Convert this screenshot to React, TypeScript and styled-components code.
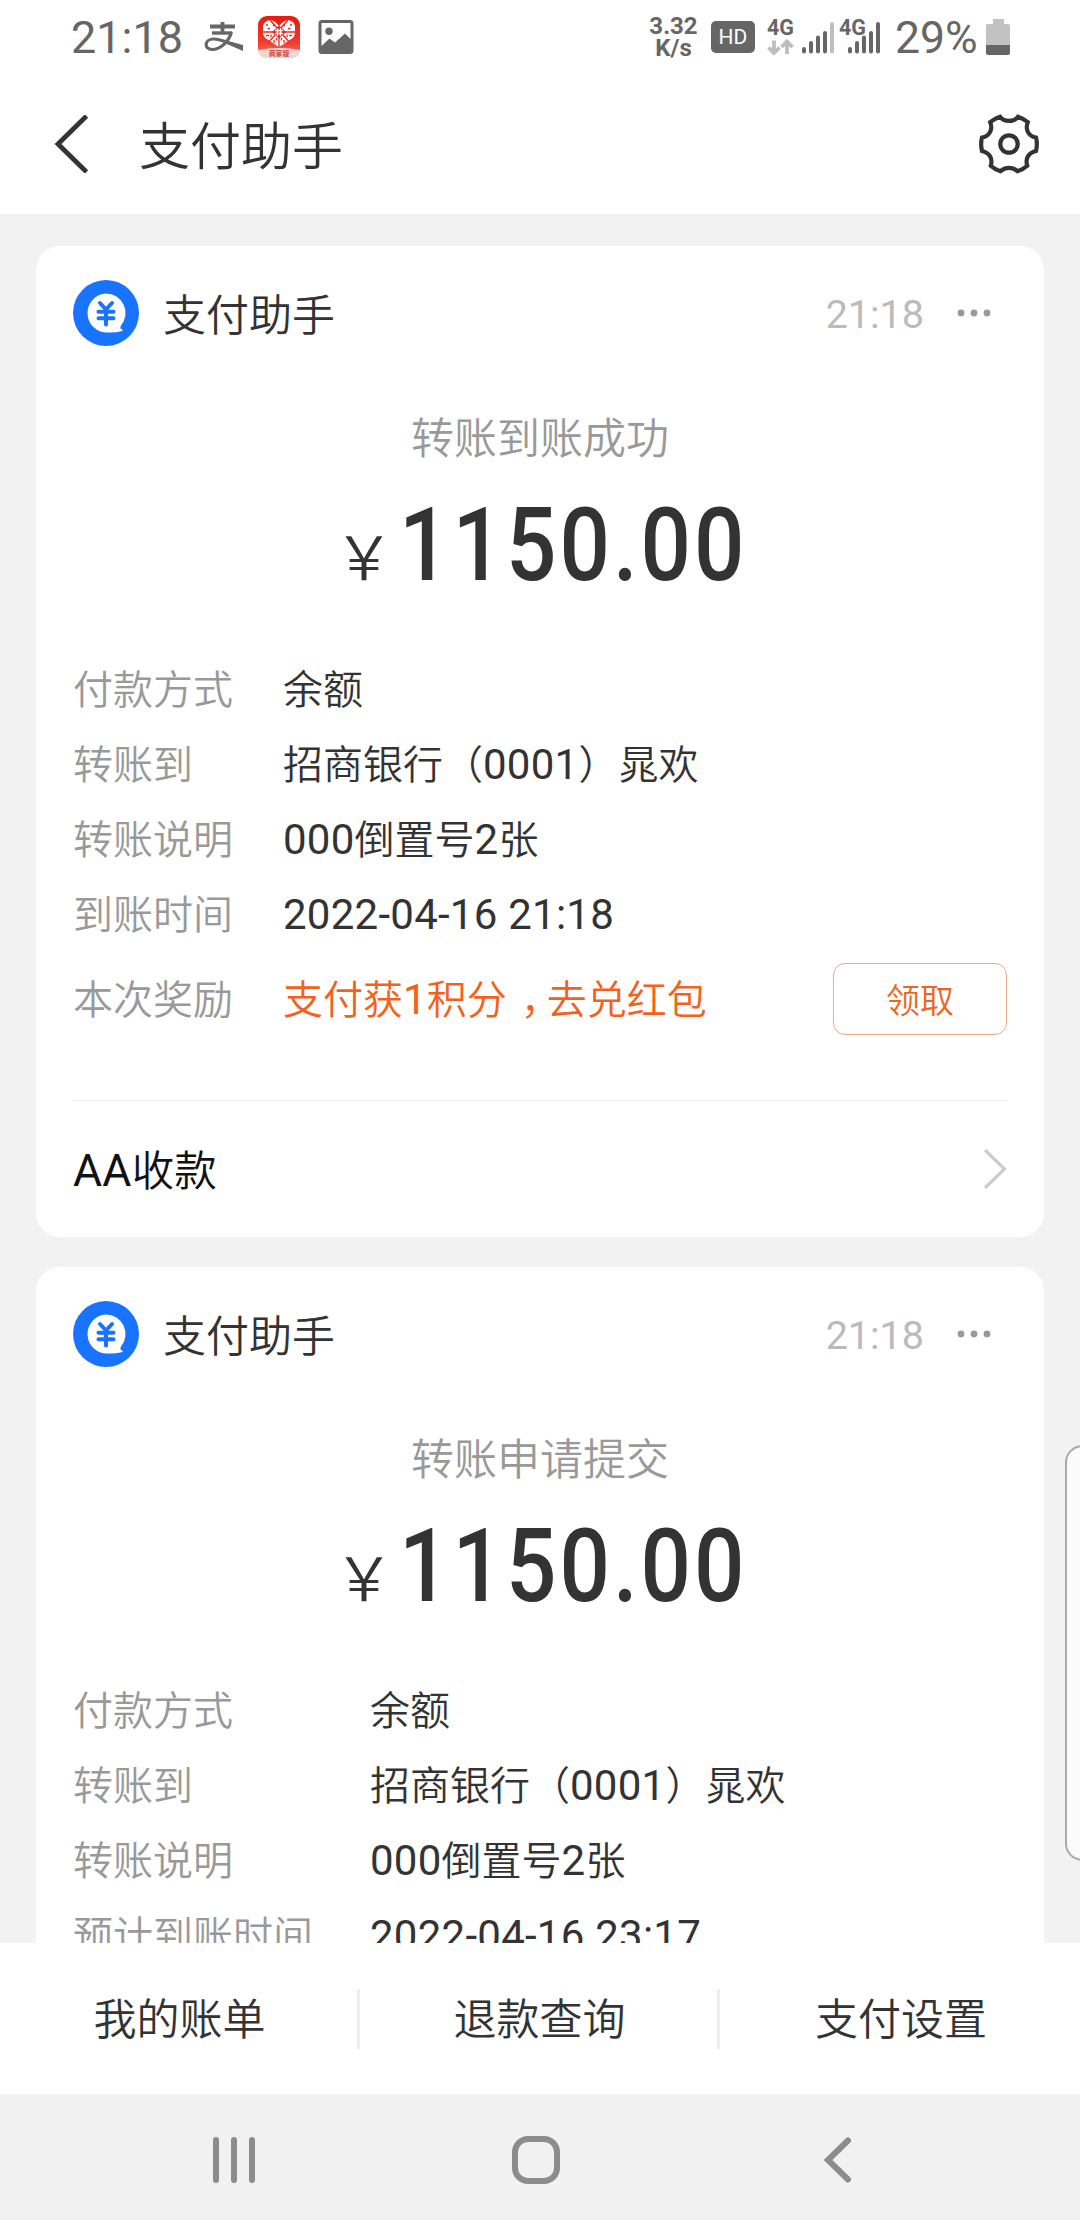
import React from "react";
import styled, { createGlobalStyle } from "styled-components";

const GlobalStyle = createGlobalStyle`
  * { box-sizing: border-box; }
  body {
    margin: 0;
    background: #f2f2f2;
    color: #333;
    font-family: Roboto, "Noto Sans CJK SC", sans-serif;
    font-weight: 400;
  }
  svg { display: block; flex: none; }
`;

const Screen = styled.div`
  position: relative;
  display: flex;
  flex-direction: column;
  width: 1080px;
  height: 2220px;
  overflow: hidden;
`;

const StatusBar = styled.div`
  display: flex;
  justify-content: space-between;
  height: 74px;
  padding: 0 70px 0 71px;
  background: #fff;
  color: #666;
  flex: none;
`;

const StatusGroup = styled.div`
  display: flex;
  align-items: center;
`;

const StatusText = styled.span<{ $w: number; $size: number }>`
  width: ${(p) => p.$w}px;
  font-size: ${(p) => p.$size}px;
  line-height: 74px;
  padding-top: 1px;
  white-space: nowrap;
`;

const Speed = styled.div`
  width: 49px;
  margin-right: 13px;
  font-size: 24px;
  font-weight: 700;
  line-height: 22px;
  text-align: center;
  white-space: nowrap;
`;

const HdBadge = styled.div`
  width: 44px;
  height: 32px;
  border-radius: 5px;
  background: #666;
  color: #fff;
  font-size: 21px;
  line-height: 32px;
  text-align: center;
  margin-right: 12px;
`;

const Header = styled.header`
  display: flex;
  align-items: center;
  height: 141px;
  padding: 0 41px 0 54px;
  background: #fff;
  border-bottom: 1px solid #ececec;
  flex: none;
`;

const HeaderTitle = styled.h1`
  flex: 1;
  margin: 8px 0 0 49px;
  font-size: 51px;
  line-height: 60px;
  font-weight: 350;
`;

const Feed = styled.main`
  flex: 1;
  display: flex;
  flex-direction: column;
  gap: 30px;
  min-height: 0;
  padding: 31px 36px 0;
  overflow: hidden;
`;

const Card = styled.section`
  flex: none;
  padding: 0 37px;
  background: #fff;
  border-radius: 24px;
`;

const CardHead = styled.div`
  display: flex;
  align-items: center;
  height: 134px;
`;

const CardName = styled.div`
  flex: 1;
  margin-left: 24px;
  padding-bottom: 3px;
  font-size: 43px;
  font-weight: 350;
`;

const CardTime = styled.div`
  margin-right: 30px;
  padding-top: 3px;
  color: #bbb;
  font-size: 39.500px;
`;

const Caption = styled.div`
  height: 60px;
  margin-top: 29px;
  color: #999;
  font-size: 43px;
  font-weight: 350;
  line-height: 60px;
  text-align: center;
`;

const Amount = styled.div`
  display: flex;
  align-items: baseline;
  height: 120px;
  margin-top: 16px;
  padding-left: 261px;
  line-height: 120px;
`;

const Yen = styled.span`
  width: 65px;
  font-family: "Noto Sans CJK SC", sans-serif;
  font-size: 60px;
  font-weight: 350;
`;

const Figure = styled.span`
  width: 343px;
  font-size: 102px;
  font-weight: 500;
  letter-spacing: 3.500px;
  transform: scaleX(0.87);
  transform-origin: left;
  white-space: nowrap;
`;

const Details = styled.dl<{ $label: number }>`
  display: grid;
  grid-template-columns: ${(p) => p.$label}px 1fr;
  grid-auto-rows: 75px;
  margin: 48px 0 0;
  font-size: 40px;
  font-weight: 350;
  line-height: 75px;
  white-space: nowrap;
`;

const Label = styled.dt`
  color: #999;
`;

const Value = styled.dd`
  margin: 0;
`;

const LatinRun = styled.span`
  font-size: 1.05em;
  font-weight: 400;
  line-height: 1;
  letter-spacing: 0.25px;
`;

const Reward = styled.div`
  display: flex;
  align-items: center;
  height: 91px;
  font-size: 40px;
  font-weight: 350;
`;

const RewardLabel = styled.span`
  padding-bottom: 3px;
  color: #999;
`;

const RewardText = styled.div`
  flex: 1;
  margin-left: 50px;
  padding-bottom: 3px;
  color: #f5611a;
`;

const Comma = styled.span`
  font-feature-settings: "halt";
  padding: 0 6px 0 14px;
`;

const ClaimButton = styled.button`
  width: 174px;
  height: 72px;
  padding: 0;
  border: 1px solid #eba98a;
  border-radius: 12px;
  background: #fff;
  color: #ec661f;
  font: inherit;
  font-size: 34px;
`;

const LinkRow = styled.div`
  display: flex;
  align-items: center;
  justify-content: space-between;
  height: 137px;
  margin-top: 56px;
  border-top: 1px solid #eee;
  color: #111;
  font-size: 42.500px;
  font-weight: 350;
`;

const LinkText = styled.span`
  padding-bottom: 3px;
`;

const Footer = styled.nav`
  display: grid;
  grid-template-columns: 1fr 1fr 1fr;
  align-items: center;
  height: 151px;
  background: #fff;
  flex: none;
`;

const FooterItem = styled.div`
  height: 60px;
  padding-top: 1px;
  padding-left: 2px;
  border-right: 3px solid #eee;
  font-size: 43px;
  font-weight: 350;
  line-height: 60px;
  text-align: center;
  &:last-child { border-right: 0; }
`;

const SystemNav = styled.div`
  display: flex;
  align-items: center;
  gap: 254px;
  height: 126px;
  padding: 6px 0 0 208px;
  background: #f1f1f1;
  flex: none;
`;

const EdgePanel = styled.div`
  position: absolute;
  top: 1445px;
  right: -20px;
  width: 35px;
  height: 416px;
  border: 2px solid #aaa;
  border-radius: 20px;
  background: #fbfbfb;
`;

const AlipayGlyph = () => (
  <svg width="40" height="32" viewBox="0 0 40 32" fill="none" stroke="#666">
    <path d="M6 5.5H31M18.5 1V12" strokeWidth="3.8" />
    <path d="M8 12H28" strokeWidth="3.4" />
    <path d="M27.500 11C25 20 17 28.500 8 28.500C0 28.500 0 18.500 9 18C18 17.500 27 24 39 26.500" strokeWidth="3.2" />
    <path d="M26 20.500L39 24V30L23 23Z" fill="#666" stroke="none" />
  </svg>
);

const ShopIcon = () => (
  <svg width="42" height="42" viewBox="0 0 42 42">
    <defs>
      <linearGradient id="shopRed" x1="0" y1="0" x2="0" y2="1">
        <stop offset="0" stopColor="#e51b10" />
        <stop offset="0.6" stopColor="#f0392c" />
        <stop offset="1" stopColor="#f77a6c" />
      </linearGradient>
      <clipPath id="shopClip"><rect width="42" height="42" rx="9" /></clipPath>
    </defs>
    <g clipPath="url(#shopClip)">
      <rect width="42" height="42" fill="url(#shopRed)" />
      <path d="M21 31L8 22.500Q5 20 5 16V10Q6 5 12 4Q16 4 21 10Q26 4 30 4Q36 5 37 10V16Q37 20 34 22.500Z" fill="#fff" />
      <g fill="none" stroke="#e92c20" strokeWidth="1.3">
        <path d="M12 4L32 27M30 4L10 27M5 16H15M27 16H37M21 22V31" />
        <path d="M8 9H10M9.500 12.500H12M17 8L15 10M32 9H34M30 12.500H32.500M25 8L27 10M8 19.500H11M13 18.500V21M16 24V27M31 19.500H34M29 18.500V21M26 24V27M18.500 22V24.500M23.500 22V24.500" />
      </g>
      <path d="M21 9.500L28 16L21 22.500L14 16Z" fill="#e8281d" />
      <path d="M17 14.500H25M17 17.500H25M19.500 12V20M22.500 12V20" stroke="#fff" strokeWidth="1.3" />
      <path d="M0 34Q21 30 42 34V42H0Z" fill="#fbd5d0" />
      <text x="21" y="40.3" textAnchor="middle" fontSize="6.8" fontWeight="700" fill="#c4473e">商家版</text>
    </g>
  </svg>
);

const PictureIcon = () => (
  <svg width="36" height="34" viewBox="0 0 36 34">
    <path fillRule="evenodd" fill="#666" d="M4 0H32Q35.500 0 35.500 3.500V30.500Q35.500 34 32 34H4Q0.500 34 0.500 30.500V3.500Q0.500 0 4 0ZM3.500 3V26L11.500 18.500L17 22.500L27 13.500L32.500 19V3Z" />
    <circle cx="11" cy="11.300" r="3.700" fill="#666" />
  </svg>
);

const Signal = ({ full, arrows }: { full?: boolean; arrows?: boolean }) => (
  <svg width={full ? 42 : 72} height="42" viewBox={full ? "0 0 42 42" : "0 0 72 42"} overflow="visible">
    <text x="0" y="19" fontSize="21.500" fontWeight="700" fill="#666" fontFamily="Roboto, sans-serif">4G</text>
    {arrows && (
      <g fill="none" stroke="#bebebe" strokeWidth="3.800">
        <path d="M7 24.500V37M1.500 31.500L7 37L12.500 31.500" />
        <path d="M20 38V26M14.500 31L20 25.500L25.500 31" />
      </g>
    )}
    <g strokeWidth="4" strokeLinecap="round" transform={full ? "translate(11 0)" : "translate(37 0)"} stroke="#666">
      <path d="M0 33V35.500M7 27V35.500M14 21.500V35.500M21 17V35.500" />
      <path d="M28 8V35.500" stroke={full ? "#666" : "#bebebe"} />
    </g>
  </svg>
);

const Battery = () => (
  <svg width="24" height="36" viewBox="0 0 24 36">
    <path d="M7 0H18V5H22Q24 5 24 7V26H0V7Q0 5 2 5H7Z" fill="#c2c2c2" />
    <path d="M0 26H24V34Q24 36 22 36H2Q0 36 0 34Z" fill="#666" />
  </svg>
);

const BackIcon = () => (
  <svg width="36" height="58" viewBox="0 0 36 58">
    <path d="M32.500 1L4 29L32.500 57" fill="none" stroke="#333" strokeWidth="4.800" />
  </svg>
);

const GearIcon = () => (
  <svg width="60" height="60" viewBox="-30 -30 60 60" fill="none" stroke="#333" strokeWidth="4.200">
    <path d="M-9 -27.200Q-14 -25.500 -18.800 -21.800C-16 -15 -19 -8 -27 -6.500Q-28.700 0 -27 7C-19 9 -16 15 -18.300 21.800Q-14 25.700 -8.500 27.200C-4 22.700 4 22.700 8.500 27.200Q14 25.700 18.300 21.800C16 15 19 9 27 7Q28.700 0 27 -6.500C19 -8 16 -15 18.800 -21.800Q14 -25.500 9 -27.200C5 -21.700 -5 -21.700 -9 -27.200Z" />
    <circle r="8.700" />
  </svg>
);

const Avatar = () => (
  <svg width="66" height="66" viewBox="0 0 66 66">
    <circle cx="33" cy="33" r="33" fill="#1873ff" />
    <path d="M33 13.500A19.500 19.500 0 1 0 35 52.500Q43 52.700 49.500 51Q50.500 50 47.500 48.500Q47 47.500 48 45.500A19.500 19.500 0 0 0 33 13.500Z" fill="#fff" />
    <path d="M27 23L33 29.500L39 23M33 30V44.500M25.500 31.700H40.500M25.500 38.300H40.500" fill="none" stroke="#1873ff" strokeWidth="4" strokeLinecap="round" strokeLinejoin="round" />
  </svg>
);

const MoreDots = () => (
  <svg width="53" height="8" viewBox="0 0 53 8" fill="#999">
    <circle cx="7" cy="4" r="3.400" />
    <circle cx="20" cy="4" r="3.400" />
    <circle cx="33" cy="4" r="3.400" />
  </svg>
);

const Chevron = () => (
  <svg width="24" height="40" viewBox="0 0 24 40">
    <path d="M2 1L21.500 20L2 39" fill="none" stroke="#ccc" strokeWidth="3.200" />
  </svg>
);

type DetailRow = [string, string];

/* Latin letters and digits run slightly larger than the Chinese glyphs beside them. */
const Mixed = ({ text }: { text: string }) => (
  <>
    {text.split(/([A-Za-z0-9:\- ]+)/).map((part, i) => (i % 2 ? <LatinRun key={i}>{part}</LatinRun> : part))}
  </>
);

const TransferHead = ({ caption }: { caption: string }) => (
  <>
    <CardHead>
      <Avatar />
      <CardName>支付助手</CardName>
      <CardTime>21:18</CardTime>
      <MoreDots />
    </CardHead>
    <Caption>{caption}</Caption>
    <Amount>
      <Yen>￥</Yen>
      <Figure>1150.00</Figure>
    </Amount>
  </>
);

const DetailList = ({ rows, label }: { rows: DetailRow[]; label: number }) => (
  <Details $label={label}>
    {rows.map(([name, value]) => (
      <React.Fragment key={name}>
        <Label>{name}</Label>
        <Value><Mixed text={value} /></Value>
      </React.Fragment>
    ))}
  </Details>
);

const arrived: DetailRow[] = [
  ["付款方式", "余额"],
  ["转账到", "招商银行（0001）晁欢"],
  ["转账说明", "000倒置号2张"],
  ["到账时间", "2022-04-16 21:18"],
];

const submitted: DetailRow[] = [
  ["付款方式", "余额"],
  ["转账到", "招商银行（0001）晁欢"],
  ["转账说明", "000倒置号2张"],
  ["预计到账时间", "2022-04-16 23:17"],
];

const IconSlot = styled.div<{ $gap: number }>`
  margin-right: ${(p) => p.$gap}px;
`;

export default function App() {
  return (
    <Screen>
      <GlobalStyle />
      <StatusBar>
        <StatusGroup>
          <StatusText $w={133} $size={45}>21:18</StatusText>
          <IconSlot $gap={14}><AlipayGlyph /></IconSlot>
          <IconSlot $gap={18}><ShopIcon /></IconSlot>
          <PictureIcon />
        </StatusGroup>
        <StatusGroup>
          <Speed>3.32<br />K/s</Speed>
          <HdBadge>HD</HdBadge>
          <Signal arrows />
          <IconSlot $gap={14}><Signal full /></IconSlot>
          <StatusText $w={91} $size={44.5}>29%</StatusText>
          <Battery />
        </StatusGroup>
      </StatusBar>
      <Header>
        <BackIcon />
        <HeaderTitle>支付助手</HeaderTitle>
        <GearIcon />
      </Header>
      <Feed>
        <Card>
          <TransferHead caption="转账到账成功" />
          <DetailList rows={arrived} label={210} />
          <Reward>
            <RewardLabel>本次奖励</RewardLabel>
            <RewardText><Mixed text="支付获1积分" /><Comma>，</Comma>去兑红包</RewardText>
            <ClaimButton>领取</ClaimButton>
          </Reward>
          <LinkRow>
            <LinkText><Mixed text="AA收款" /></LinkText>
            <Chevron />
          </LinkRow>
        </Card>
        <Card>
          <TransferHead caption="转账申请提交" />
          <DetailList rows={submitted} label={297} />
        </Card>
      </Feed>
      <Footer>
        <FooterItem>我的账单</FooterItem>
        <FooterItem>退款查询</FooterItem>
        <FooterItem>支付设置</FooterItem>
      </Footer>
      <SystemNav>
        <svg width="50" height="50" viewBox="0 0 50 50" stroke="#8c8c8c" strokeWidth="6" strokeLinecap="round">
          <path d="M8 5V45M26 5V45M44 5V45" />
        </svg>
        <svg width="48" height="48" viewBox="0 0 48 48" fill="none" stroke="#8c8c8c" strokeWidth="6">
          <rect x="3" y="3" width="42" height="42" rx="13" />
        </svg>
        <svg width="50" height="50" viewBox="0 0 50 50" fill="none" stroke="#8c8c8c" strokeWidth="6" strokeLinecap="round">
          <path d="M34 5.500L14 25L34 44.500" />
        </svg>
      </SystemNav>
      <EdgePanel />
    </Screen>
  );
}
